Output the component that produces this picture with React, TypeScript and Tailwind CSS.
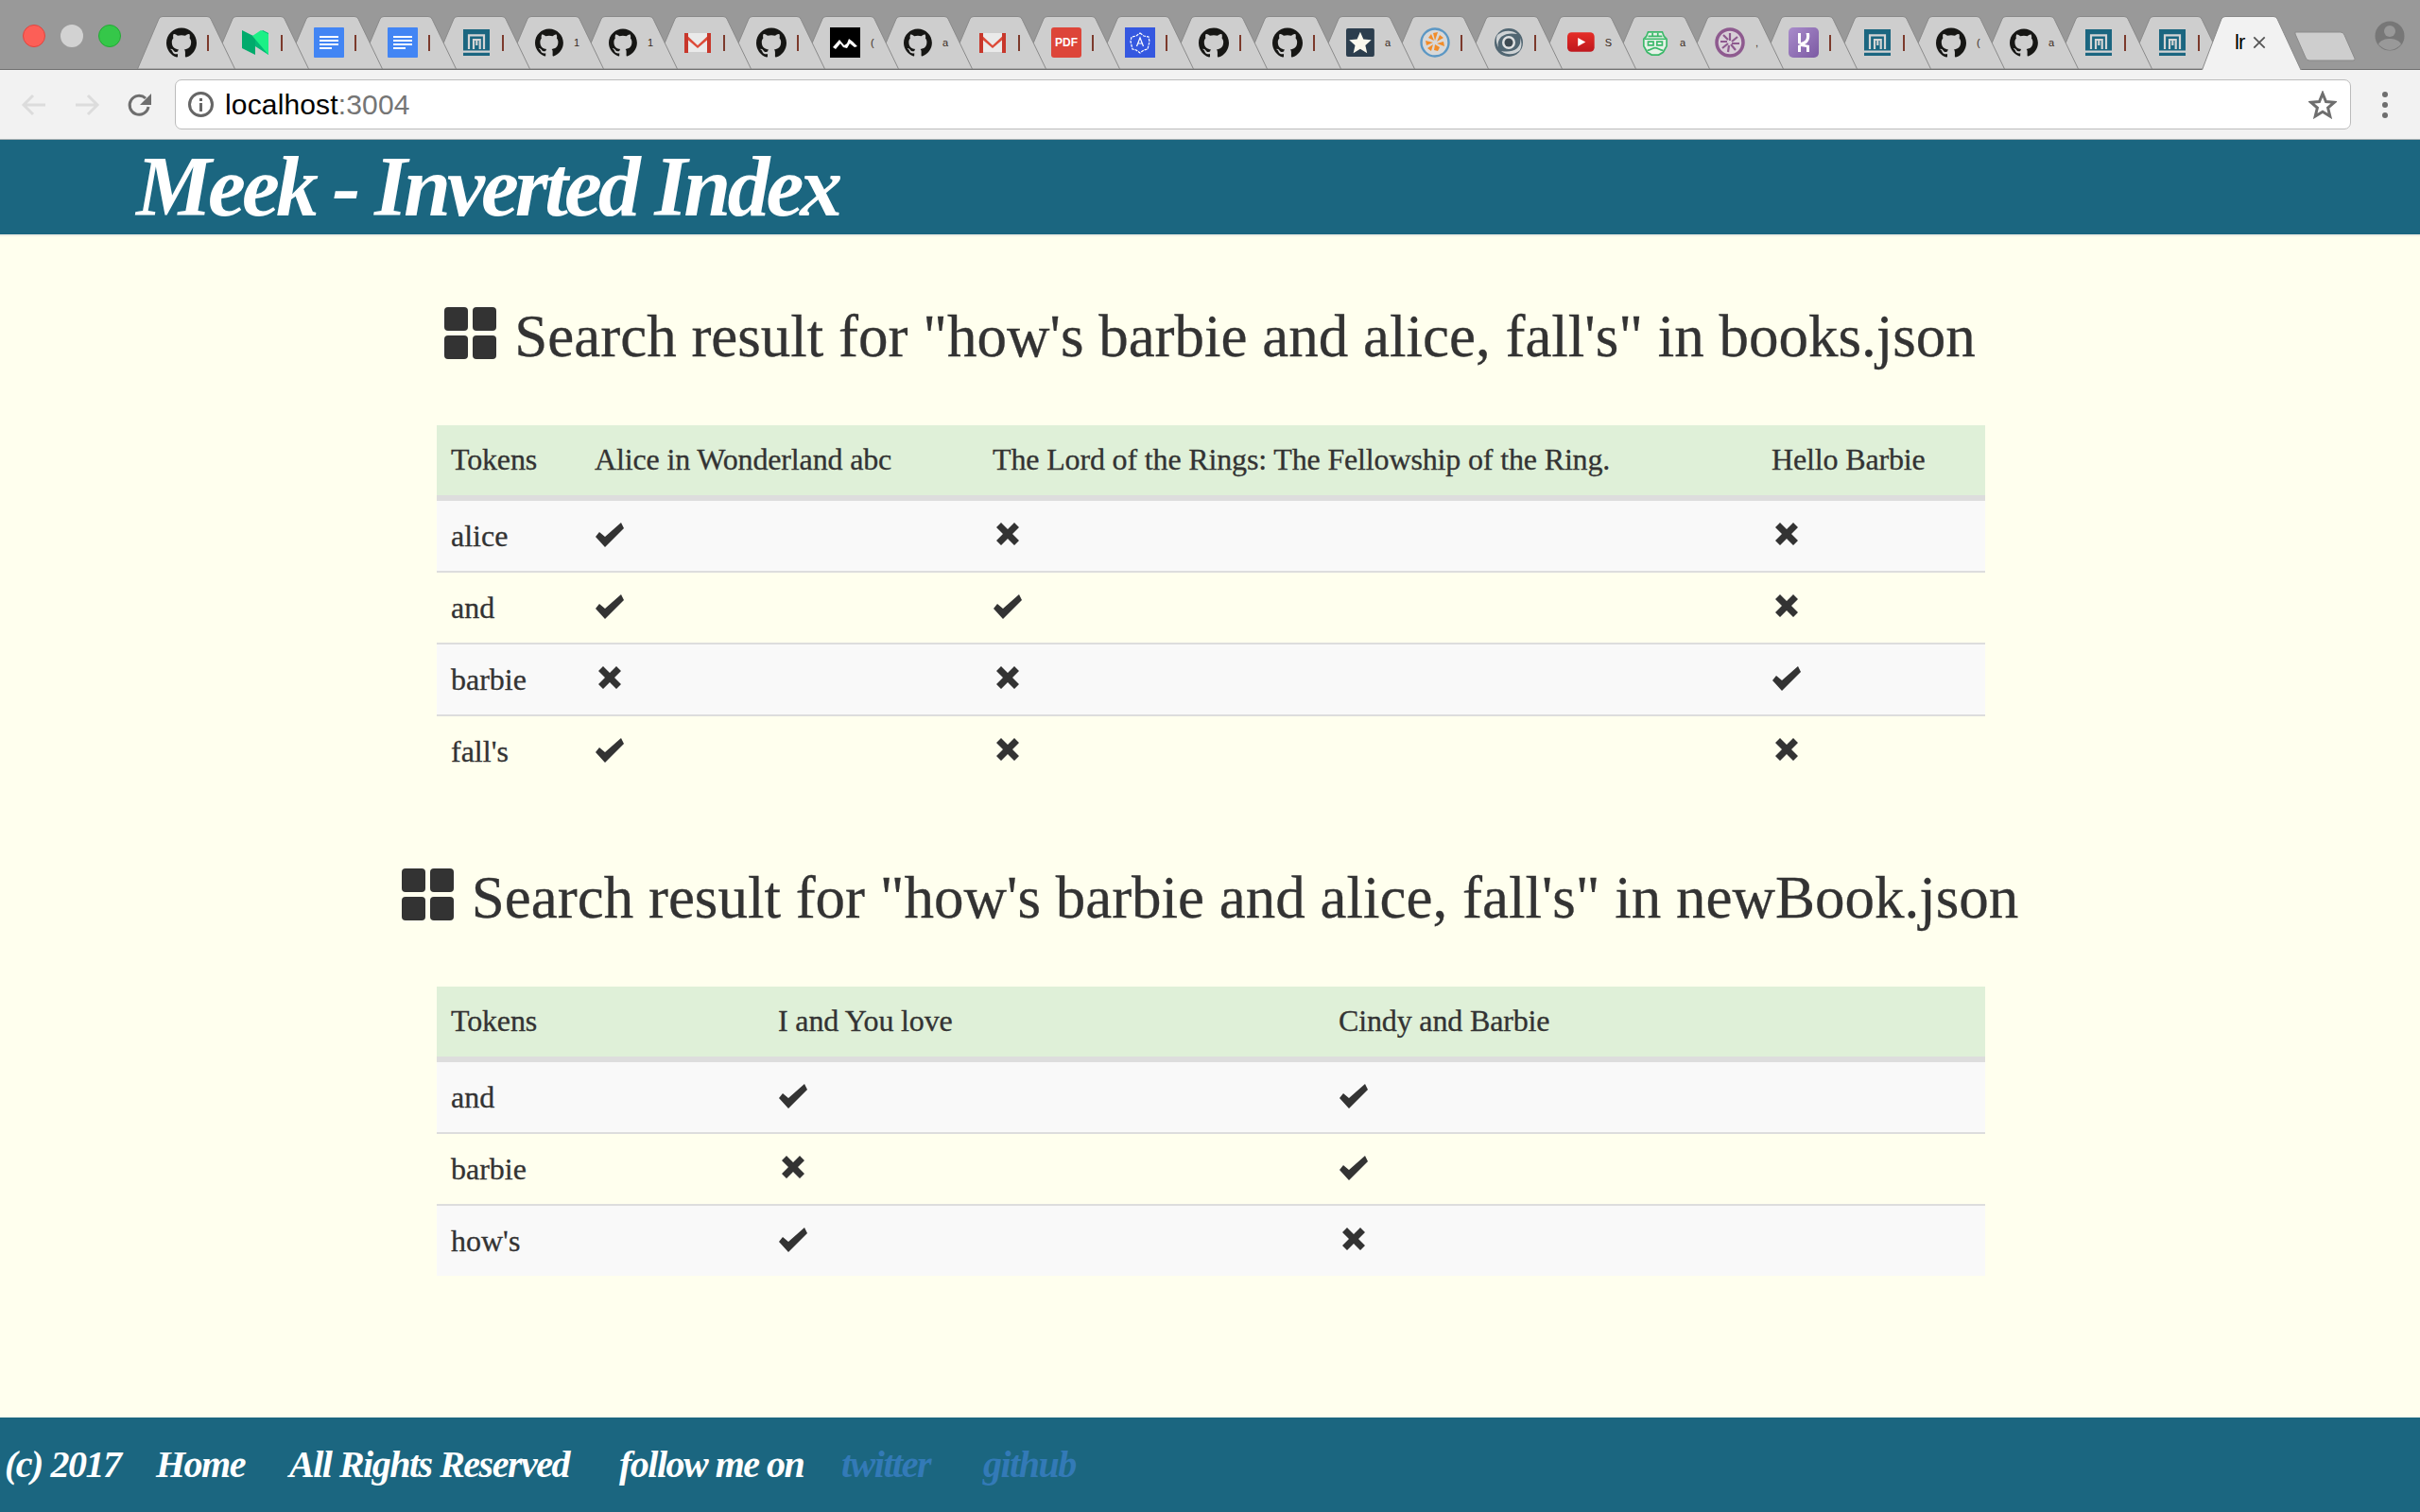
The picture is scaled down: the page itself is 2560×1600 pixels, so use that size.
import { SiGithub } from 'react-icons/si'

const TAB_ICONS = [
  'github', 'medium', 'docs', 'docs', 'meek', 'github', 'github', 'gmail', 'github', 'mountain',
  'github', 'gmail', 'pdf', 'angular', 'github', 'github', 'star', 'pinwheel', 'swirl', 'youtube',
  'mustache', 'spokes', 'heroku', 'meek', 'github', 'github', 'meek', 'meek',
]

// what peeks out of each squeezed tab title
const SLIVERS: Record<number, string> = { 5: '1', 6: '1', 9: '(', 10: 'a', 16: 'a', 19: 'S', 20: 'a', 21: ',', 24: '(', 25: 'a' }

function FavIcon({ name }: { name: string }) {
  if (name === 'github') return <SiGithub className="w-8 h-8 text-[#161614]" />
  if (name === 'medium')
    return (
      <svg viewBox="0 0 32 32" className="w-8 h-8">
        <path d="M2 3l14 7v19L2 22z" fill="#00ab6c" />
        <path d="M16 10l8-7 6 3v23l-14-9z" fill="#02b875" />
        <path d="M13 9l9-6 8 4v22z" fill="#1cf086" />
      </svg>
    )
  if (name === 'docs')
    return (
      <svg viewBox="0 0 32 32" className="w-8 h-8">
        <rect width="32" height="32" rx="1" fill="#4285f4" />
        <path d="M6 9h20v2H6zM6 13h20v2H6zM6 17h20v2H6zM6 21h13v2H6z" fill="#fff" />
      </svg>
    )
  if (name === 'meek')
    return (
      <svg viewBox="0 0 32 32" className="w-8 h-8">
        <rect x="2" y="2" width="28" height="28" fill="#1b6680" />
        <path d="M8 23V8.300H24V23M13 23V13H19.700V23M16.300 13V19M2 25.700H30" fill="none" stroke="#d5d5d5" strokeWidth="2.200" />
      </svg>
    )
  if (name === 'gmail')
    return (
      <svg viewBox="0 0 32 32" className="w-8 h-8">
        <path d="M2 6h28v20H2z" fill="#eaeaea" />
        <path d="M2 6l14 13L30 6v4L16 22 2 10z" fill="#dd4b39" />
        <path d="M2 6h4v21H2zM26 6h4v21h-4z" fill="#c8372b" />
      </svg>
    )
  if (name === 'mountain')
    return (
      <svg viewBox="0 0 32 32" className="w-8 h-8">
        <rect width="32" height="32" fill="#000" />
        <path d="M3 21l7-8 5 6 3-2 2-5 4 3 5 5-3 1-5-4-3 5-4-1-3-4-5 6z" fill="#fff" />
      </svg>
    )
  if (name === 'pdf')
    return (
      <div className="w-8 h-8 rounded-[3px] bg-[#dd4539] flex items-center justify-center text-white font-bold text-[12px] font-['Liberation_Sans',sans-serif]">
        PDF
      </div>
    )
  if (name === 'angular')
    return (
      <svg viewBox="0 0 32 32" className="w-8 h-8">
        <rect width="32" height="32" fill="#3558e0" />
        <path d="M16 6l4 3 5 1 1 5-1 4-1 4-4 1-4 3-4-3-4-1-1-4-1-4 1-5 5-1z" fill="none" stroke="#fff" strokeWidth="1.2" strokeDasharray="3 1" />
        <path d="M12.5 20L16 11l3.5 9M14 17h4" fill="none" stroke="#fff" strokeWidth="1.2" />
      </svg>
    )
  if (name === 'star')
    return (
      <svg viewBox="0 0 32 32" className="w-8 h-8">
        <rect width="32" height="32" rx="2" fill="#2c3e4e" />
        <path d="M16 4l3.6 8.3 9 .8-6.800 6 2 8.900L16 23.300 8.200 28l2-8.900-6.800-6 9-.8z" fill="#fbf9ee" />
      </svg>
    )
  if (name === 'pinwheel')
    return (
      <svg viewBox="0 0 32 32" className="w-8 h-8">
        <circle cx="16" cy="16" r="14.500" fill="#d8d8d8" stroke="#5b97c4" strokeWidth="2.400" />
        <path d="M16 14l-2-8 5-1zM18 15l3-7 4 3zM18 17l7-2 1 5zM16 18l5 3-2 4-4-1zM14 18l-2 7-4-3zM14 16l-7 3-1-5zM15 14l-6-3 3-4z" fill="#f28c28" />
      </svg>
    )
  if (name === 'swirl')
    return (
      <svg viewBox="0 0 32 32" className="w-8 h-8">
        <circle cx="16" cy="16" r="15" fill="#516672" />
        <path d="M4 8c6-5 15-6 21-1-6-1-12-1-17 3-3 3-4 7-3 11-2-4-3-9-1-13zM28 24c-5 5-14 6-20 1 6 1 12 1 17-3 3-3 4-7 3-11 2 4 2 9 0 13z" fill="#cfd3d5" />
        <circle cx="16" cy="16" r="7" fill="#e0e2e3" />
        <circle cx="16" cy="16" r="4.500" fill="#3d4a52" />
      </svg>
    )
  if (name === 'youtube')
    return (
      <svg viewBox="0 0 32 32" className="w-8 h-8">
        <defs>
          <linearGradient id="yt" x1="0" y1="0" x2="0" y2="1">
            <stop offset="0" stopColor="#e52d27" />
            <stop offset="1" stopColor="#bf171d" />
          </linearGradient>
        </defs>
        <rect y="4" width="32" height="23" rx="5" fill="url(#yt)" />
        <path d="M12.500 10.500l9 5-9 5z" fill="#fff" />
      </svg>
    )
  if (name === 'mustache')
    return (
      <svg viewBox="0 0 32 32" className="w-8 h-8">
        <path d="M8 4h16l2 5 3 3v8l-4 7-5 3h-8l-5-3-4-7v-8l3-3z" fill="#e7f2e8" stroke="#3cb96a" strokeWidth="1.800" />
        <path d="M4 12h24M8 9h16M13 5v4h6V5M8 15h6v4H8zM18 15h6v4h-6zM7 25c4 0 6-3 9-3s5 3 9 3" fill="none" stroke="#3cb96a" strokeWidth="1.800" />
      </svg>
    )
  if (name === 'spokes')
    return (
      <svg viewBox="0 0 32 32" className="w-8 h-8">
        <circle cx="16" cy="16" r="14" fill="#d8cfd8" stroke="#8e5a8f" strokeWidth="3.500" />
        <path d="M16 14V6M18 15l6-5M18 17h8M17 18l5 6M15 19l-1 7M14 17l-6 5M13 15H6M14 13L9 8" stroke="#8e5a8f" strokeWidth="2.200" />
      </svg>
    )
  return (
    <svg viewBox="0 0 32 32" className="w-8 h-8">
      <defs>
        <linearGradient id="hk" x1="0" y1="0" x2="1" y2="1">
          <stop offset="0" stopColor="#a98ccb" />
          <stop offset="1" stopColor="#7c5aa3" />
        </linearGradient>
      </defs>
      <rect width="32" height="32" rx="5" fill="url(#hk)" />
      <path d="M10 6h3v10c4-1 6-3 6-6 0-1 0-3-.5-4H22c1 6-1 10-5 12l5 1v7h-3v-5l-6-1v6h-3v-7l3-1-3-1z" fill="#fff" />
    </svg>
  )
}

function Tab({ icon, index }: { icon: string; index: number }) {
  const sliver = SLIVERS[index]
  return (
    <div className="relative w-[78px] h-[56px] shrink-0">
      <svg viewBox="0 0 104 56" className="absolute left-0 top-0 w-[104px] h-[56px]">
        <path d="M0.500 56 L23 3 Q24 0.500 27 0.500 H74 Q77 0.500 78 3 L103.500 56 Z" fill="#cecece" stroke="#8a8a8a" />
      </svg>
      <div className="relative h-full pl-[31px] flex items-center">
        <FavIcon name={icon} />
        {sliver ? (
          <span className="ml-[11px] text-[11px] leading-none text-[#3a2a20] font-['Liberation_Sans',sans-serif]">
            {sliver}
          </span>
        ) : (
          <span className="ml-[11px] w-[2px] h-[17px] bg-[#7c3a2c]" />
        )}
      </div>
    </div>
  )
}

function BrowserChrome() {
  return (
    <div className="bg-[#f2f2f2]">
      <div className="h-[74px] bg-[#999999] border-b border-[#6f6f6f] flex">
        <div className="w-[145px] shrink-0 flex items-start pt-[26px] pl-[24px] gap-4">
          <div className="w-6 h-6 rounded-full bg-[#fc5f57] border border-[#e0443e]" />
          <div className="w-6 h-6 rounded-full bg-[#d2d2d2]" />
          <div className="w-6 h-6 rounded-full bg-[#35c749] border border-[#24a935]" />
        </div>
        <div className="w-[2184px] shrink-0 pt-[17px] flex flex-row-reverse">
          {TAB_ICONS.map((_, i) => TAB_ICONS.length - 1 - i).map(i => (
            <Tab key={i} icon={TAB_ICONS[i]} index={i} />
          ))}
        </div>
        <div className="relative w-[106px] h-[74px] shrink-0 pt-[17px]">
          <svg viewBox="0 0 106 57" className="absolute left-0 top-[17px] w-[106px] h-[57px]">
            <path d="M-1 57 H0.500 L21 3 Q22.500 0.500 25 0.500 H76 Q79 0.500 80 3 L105 57 H107" fill="#f2f2f2" stroke="#8a8a8a" />
          </svg>
          <div className="relative flex items-center pl-[35px] h-[56px]">
            <span className="text-[22px] leading-none tracking-[-1px] text-black font-['Liberation_Sans',sans-serif]">lr</span>
            <svg viewBox="0 0 16 16" className="w-[14px] h-[14px] ml-[9px] text-[#555]">
              <path d="M1.500 1.500l13 13M14.500 1.500l-13 13" stroke="currentColor" strokeWidth="2" />
            </svg>
          </div>
        </div>
        <svg viewBox="0 0 66 32" className="w-[66px] h-[32px] mt-[33px] -ml-[8px] shrink-0">
          <path d="M1 1h48q3 0 4 3l11 25q1 2-2 2H16q-3 0-4-3L1 3z" fill="#cecece" stroke="#8a8a8a" />
        </svg>
        <svg viewBox="0 0 32 32" className="w-[32px] h-[32px] mt-[22px] ml-[19px] shrink-0">
          <circle cx="16" cy="16" r="15.500" fill="#777" />
          <circle cx="16" cy="11" r="6" fill="#999" />
          <path d="M4 25c2-5 8-6 12-6s10 1 12 6c-3 3-8 6-12 6s-9-3-12-6z" fill="#999" />
        </svg>
      </div>
      <div className="h-[74px] border-b border-[#a8b0b2] flex items-center">
        <svg viewBox="0 0 28 28" className="w-7 h-7 ml-[22px] text-[#dcdcdc]">
          <path d="M26 14H3M13 4L3 14l10 10" fill="none" stroke="currentColor" strokeWidth="3" />
        </svg>
        <svg viewBox="0 0 28 28" className="w-7 h-7 ml-[28px] text-[#dcdcdc]">
          <path d="M2 14h23M15 4l10 10-10 10" fill="none" stroke="currentColor" strokeWidth="3" />
        </svg>
        <svg viewBox="0 0 28 28" className="w-7 h-7 ml-[28px] text-[#6e6e6e]">
          <path d="M23 16a10 10 0 1 1-3-9" fill="none" stroke="currentColor" strokeWidth="3" />
          <path d="M26 2v12H14z" fill="currentColor" />
        </svg>
        <div className="ml-[23px] w-[2302px] h-[53px] bg-white border border-[#bcbcbc] rounded-[7px] flex items-center">
          <div className="ml-[13px] w-[27px] h-[27px] rounded-full border-[3px] border-[#666] flex flex-col items-center justify-center gap-[2px]">
            <span className="w-[3px] h-[3px] bg-[#666]" />
            <span className="w-[3px] h-[9px] bg-[#666]" />
          </div>
          <span className="ml-[12px] text-[30px] leading-none tracking-[0.15px] text-black font-['Liberation_Sans',sans-serif]">
            localhost<span className="text-[#757575]">:3004</span>
          </span>
          <svg viewBox="0 0 30 30" className="w-[30px] h-[30px] ml-auto mr-[14px] text-[#6e6e6e]">
            <path d="M15 3l3.500 8.500 9 .7-6.900 5.800 2.200 9L15 22.200 7.200 27l2.200-9-6.900-5.800 9-.7z" fill="none" stroke="currentColor" strokeWidth="3" />
          </svg>
        </div>
        <div className="ml-[33px] flex flex-col gap-[5px]">
          <span className="w-[6px] h-[6px] rounded-full bg-[#6e6e6e]" />
          <span className="w-[6px] h-[6px] rounded-full bg-[#6e6e6e]" />
          <span className="w-[6px] h-[6px] rounded-full bg-[#6e6e6e]" />
        </div>
      </div>
    </div>
  )
}

function GridIcon() {
  return (
    <svg viewBox="0 0 55 55" className="w-[55px] h-[55px] shrink-0 fill-[#333333]">
      <rect width="25" height="25" rx="4" />
      <rect x="30" width="25" height="25" rx="4" />
      <rect y="30" width="25" height="25" rx="4" />
      <rect x="30" y="30" width="25" height="25" rx="4" />
    </svg>
  )
}

function Mark({ yes }: { yes: boolean }) {
  return (
    <svg viewBox="0 0 32 32" className="block w-8 h-8 -translate-y-[1px] fill-[#333333]">
      {yes ? (
        <path d="M1 18l10 11L31 9l-3-6L11 18l-6-5z" />
      ) : (
        <path d="M9 3l7 7 7-7 5 5-7 7 7 7-5 5-7-7-7 7-5-5 7-7-7-7z" />
      )}
    </svg>
  )
}

function ResultSection({
  file,
  widths,
  columns,
  rows,
}: {
  file: string
  widths: string[]
  columns: string[]
  rows: { token: string; marks: boolean[] }[]
}) {
  return (
    <section>
      <h2 className="h-[60px] flex items-center justify-center gap-[19px] text-[63px] leading-none font-normal text-[#333333] whitespace-nowrap [-webkit-text-stroke:0.3px_#333333]">
        <GridIcon />
        <span className="pt-[8px]">Search result for "how's barbie and alice, fall's" in {file}</span>
      </h2>
      <table className="mt-[68px] ml-[462px] w-[1638px] table-fixed border-separate border-spacing-0 text-[32px] text-[#333333] [-webkit-text-stroke:0.3px_#333333]">
        <thead>
          <tr className="bg-[#dff0d8]">
            {columns.map((c, i) => (
              <th key={c} className={`${widths[i]} h-[80px] pb-[2px] pl-[15px] border-b-[6px] border-[#dddddd] text-left font-normal tracking-[-0.15px] whitespace-nowrap`}>
                {c}
              </th>
            ))}
          </tr>
        </thead>
        <tbody>
          {rows.map((r, i) => {
            const last = i === rows.length - 1
            return (
              <tr key={r.token} className={i % 2 === 0 ? 'bg-[#f9f9f9]' : ''}>
                <td className={`pl-[15px] ${last ? 'h-[74px]' : 'h-[76px] border-b-2 border-[#dddddd]'}`}>{r.token}</td>
                {r.marks.map((m, j) => (
                  <td key={j} className={`pl-[15px] ${last ? 'h-[74px]' : 'h-[76px] border-b-2 border-[#dddddd]'}`}>
                    <Mark yes={m} />
                  </td>
                ))}
              </tr>
            )
          })}
        </tbody>
      </table>
    </section>
  )
}

export default function App() {
  return (
    <div className="h-screen flex flex-col overflow-hidden bg-[#ffffee] font-['Liberation_Serif',serif]">
      <BrowserChrome />
      <header className="h-[102px] shrink-0 bg-[#1b6680] border-b-2 border-[#eeeee4] pl-[144px] flex items-center">
        <h1 className="text-[90px] leading-none font-bold italic tracking-[-4px] text-white whitespace-nowrap">
          Meek - Inverted Index
        </h1>
      </header>
      <main className="flex-1 pt-[72px] flex flex-col gap-[84px]">
        <ResultSection
          file="books.json"
          widths={['w-[152px]', 'w-[421px]', 'w-[824px]', 'w-[241px]']}
          columns={['Tokens', 'Alice in Wonderland abc', 'The Lord of the Rings: The Fellowship of the Ring.', 'Hello Barbie']}
          rows={[
            { token: 'alice', marks: [true, false, false] },
            { token: 'and', marks: [true, true, false] },
            { token: 'barbie', marks: [false, false, true] },
            { token: "fall's", marks: [true, false, false] },
          ]}
        />
        <ResultSection
          file="newBook.json"
          widths={['w-[346px]', 'w-[593px]', 'w-[699px]']}
          columns={['Tokens', 'I and You love', 'Cindy and Barbie']}
          rows={[
            { token: 'and', marks: [true, true] },
            { token: 'barbie', marks: [false, true] },
            { token: "how's", marks: [true, false] },
          ]}
        />
      </main>
      <footer className="h-[100px] shrink-0 bg-[#1b6680] flex items-center text-[40px] font-bold italic text-white whitespace-nowrap tracking-[-1.5px]">
        <span className="w-[165px] pl-[5px]">(c) 2017</span>
        <span className="w-[141px]">Home</span>
        <span className="w-[349px]">All Rights Reserved</span>
        <span className="w-[235px]">follow me on</span>
        <span className="w-[150px] text-[#337ab7]">twitter</span>
        <span className="text-[#337ab7]">github</span>
      </footer>
    </div>
  )
}
